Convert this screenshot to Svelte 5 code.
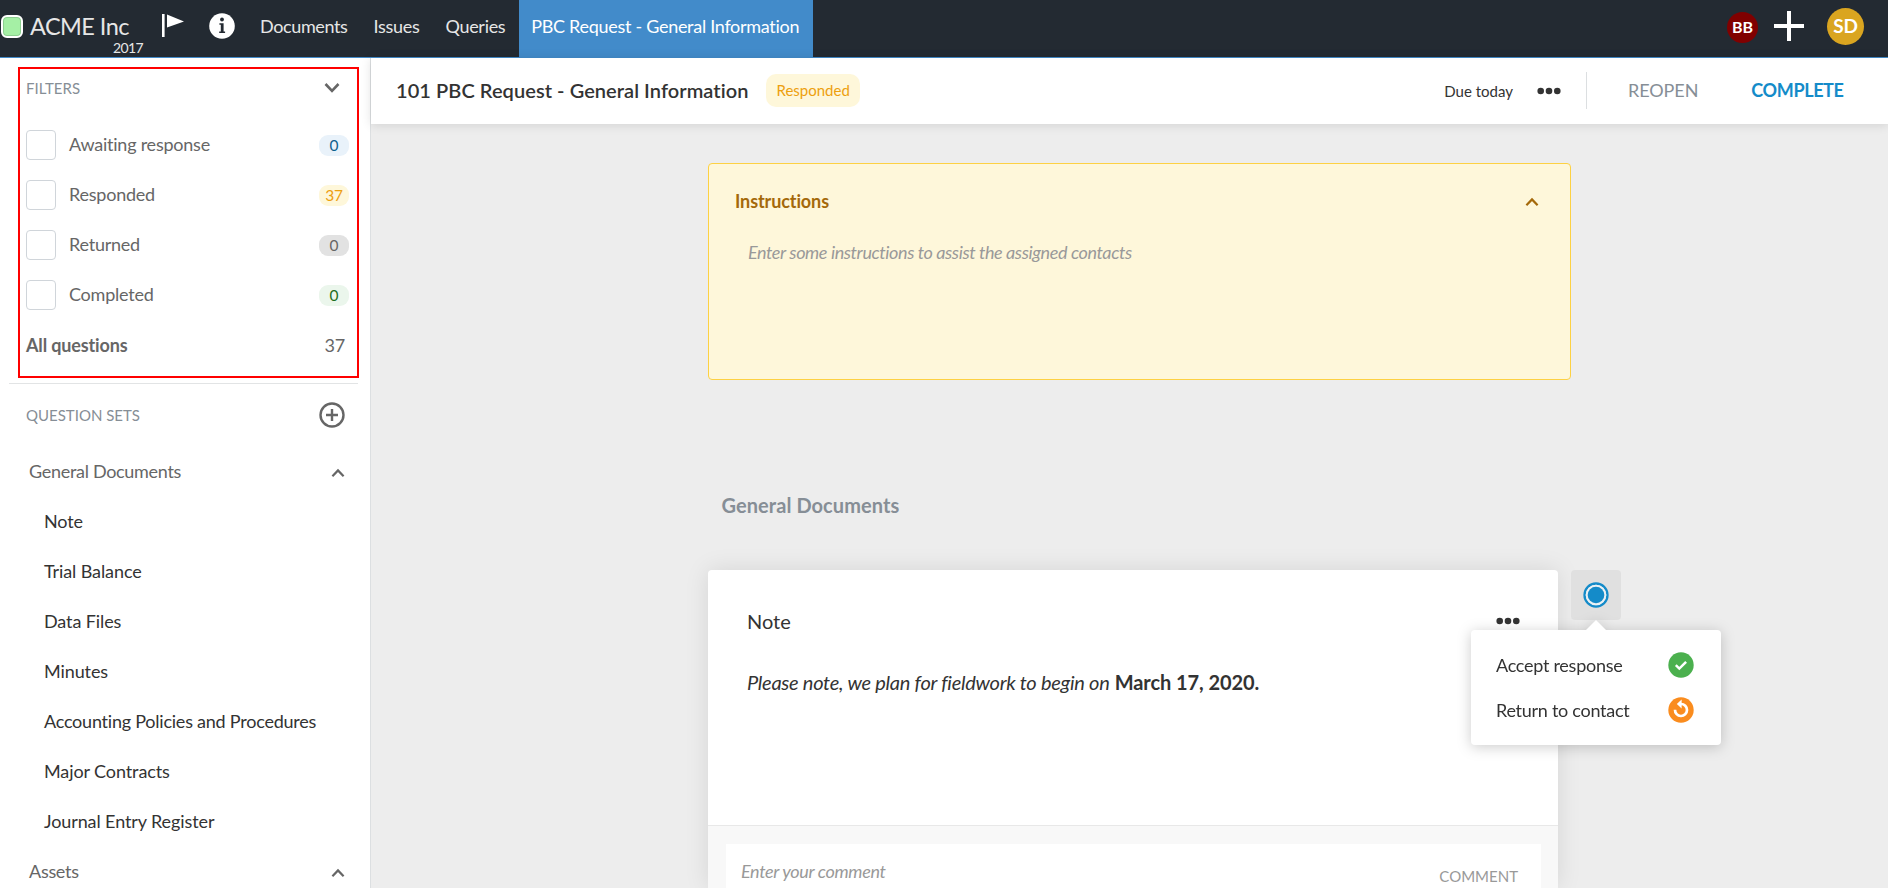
<script>
  const filters = [
    { label: 'Awaiting response', count: 0, tone: 'blue' },
    { label: 'Responded', count: 37, tone: 'yellow' },
    { label: 'Returned', count: 0, tone: 'grey' },
    { label: 'Completed', count: 0, tone: 'green' }
  ];
  const questions = ['Note', 'Trial Balance', 'Data Files', 'Minutes', 'Accounting Policies and Procedures', 'Major Contracts', 'Journal Entry Register'];
</script>

{#snippet dots()}
  <svg class="dots" width="24" height="8" viewBox="0 0 24 8"><circle cx="3.7" cy="4" r="3.3" /><circle cx="12" cy="4" r="3.3" /><circle cx="20.3" cy="4" r="3.3" /></svg>
{/snippet}

{#snippet up()}
  <svg class="up" width="14" height="10" viewBox="0 0 14 10"><path d="M1.4 8.2 7 2.4l5.6 5.8" /></svg>
{/snippet}

<div class="page">
  <header class="topbar">
    <span class="logo"></span>
    <div class="brand"><span class="name">ACME Inc</span><span class="year">2017</span></div>
    <svg class="flag" width="24" height="26" viewBox="0 0 24 26"><path d="M1 1h2.6v23H1zM6 1.5l17 7-17 6z" fill="#fff" /></svg>
    <svg class="info" width="26" height="26" viewBox="0 0 26 26"><circle cx="13" cy="13" r="12.8" fill="#fff" /><circle cx="13" cy="6.5" r="1.9" fill="#232a32" /><path d="M10.4 10.3h4.2v8.3h1.5v1.5h-5.9v-1.5h1.6v-6.8h-1.4z" fill="#232a32" /></svg>
    <nav>
      <span class="link">Documents</span><span class="link">Issues</span><span class="link">Queries</span><span class="link active">PBC Request - General Information</span>
    </nav>
    <div class="right">
      <span class="avatar bb">BB</span>
      <svg class="plus" width="30" height="30" viewBox="0 0 30 30"><path d="M13 0h4v13h13v4H17v13h-4V17H0v-4h13z" fill="#fff" /></svg>
      <span class="avatar sd">SD</span>
    </div>
  </header>

  <div class="body">
    <aside>
      <section class="filters">
        <div class="cap"><span>FILTERS</span><svg class="down" width="16" height="12" viewBox="0 0 16 12"><path d="M1.5 2 8 8.8 14.5 2" /></svg></div>
        {#each filters as f}
          <div class="filter"><i></i><span class="label">{f.label}</span><b class={f.tone}>{f.count}</b></div>
        {/each}
        <div class="all"><strong>All questions</strong><span>37</span></div>
      </section>
      <div class="cap sets"><span>QUESTION SETS</span><svg class="add" width="26" height="26" viewBox="0 0 26 26"><circle cx="13" cy="13" r="11.5" /><path d="M13 7v12M7 13h12" /></svg></div>
      <div class="group"><span>General Documents</span>{@render up()}</div>
      {#each questions as q}<div class="item" class:long={q.length > 30}>{q}</div>{/each}
      <div class="group"><span>Assets</span>{@render up()}</div>
      <div class="highlight"></div>
    </aside>

    <main>
      <div class="titlebar">
        <h1>101 PBC Request - General Information</h1>
        <span class="status">Responded</span>
        <div class="actions">
          <span class="due">Due today</span>{@render dots()}<span class="rule"></span>
          <span class="reopen">REOPEN</span><span class="complete">COMPLETE</span>
        </div>
      </div>
      <div class="content">
        <section class="instructions">
          <div class="ihead"><h2>Instructions</h2>{@render up()}</div>
          <p>Enter some instructions to assist the assigned contacts</p>
        </section>
        <h3>General Documents</h3>
        <div class="row">
          <article>
            <div class="chead"><span>Note</span>{@render dots()}</div>
            <p class="msg"><em>Please note, we plan for fieldwork to begin on</em> <strong>March 17, 2020.</strong></p>
            <footer><div class="comment"><em>Enter your comment</em><span>COMMENT</span></div></footer>
          </article>
          <div class="state">
            <svg width="26" height="26" viewBox="0 0 26 26"><circle cx="13" cy="13" r="11.5" fill="none" stroke="#148bc9" stroke-width="2.3" /><circle cx="13" cy="13" r="9.3" fill="none" stroke="#e9f1f5" stroke-width="2" /><circle cx="13" cy="13" r="8.3" fill="#148bc9" /></svg>
            <div class="menu">
              <div><span>Accept response</span><svg width="26" height="26" viewBox="0 0 26 26"><circle cx="13" cy="13" r="12.7" fill="#4bb04e" /><path d="m7.8 13.2 3.5 3.4 6.8-6.8" fill="none" stroke="#fff" stroke-width="2.5" /></svg></div>
              <div><span>Return to contact</span><svg width="26" height="26" viewBox="0 0 26 26"><circle cx="13" cy="13" r="12.7" fill="#fa8c1e" /><path d="M7 12.8a6 6 0 1 0 6-5.8" fill="none" stroke="#fff" stroke-width="2.7" /><path d="M13.6 2.6v8.8L8.8 7z" fill="#fff" /></svg></div>
            </div>
          </div>
        </div>
      </div>
    </main>
  </div>
</div>

<style>
  .page { width: 1888px; height: 888px; overflow: hidden; display: flex; flex-direction: column; font-family: Lato, sans-serif; font-size: 18px; color: #333; background: #ededed; }
  h1, h2, h3, p { margin: 0; }
  span, strong, em { white-space: nowrap; }
  .topbar { flex: none; height: 58px; box-sizing: border-box; border-bottom: 1px solid #428bca; background: #232a32; display: flex; align-items: flex-start; color: #e6e6e6; }
  .logo { box-sizing: border-box; width: 22px; height: 23px; margin: 15px 7px 0 1px; border: 2px solid #fff; border-radius: 6px; background: #a5f0a5; box-shadow: inset 0 0 0 1px #8ccf90; }
  .brand { width: 113px; height: 57px; display: flex; flex-direction: column; }
  .name { font-size: 23.5px; letter-spacing: -0.55px; line-height: 30px; margin-top: 11px; }
  .year { font-size: 14px; letter-spacing: -0.6px; line-height: 16px; align-self: flex-end; margin-top: -1px; }
  .flag { margin: 13px 0 0 18px; }
  .info { margin: 13px 0 0 24px; }
  nav { display: flex; margin-left: 12px; letter-spacing: -0.29px; }
  .link { padding: 0 13px; line-height: 52px; height: 57px; }
  .link:first-child { letter-spacing: -0.38px; }
  .link.active { padding: 0 13.8px 0 12.3px; margin-left: 0.5px; background: #428bca; color: #fff; }
  .right { margin-left: auto; display: flex; height: 57px; }
  .avatar { border-radius: 50%; color: #fff; font-weight: 700; text-align: center; }
  .bb { width: 31px; height: 31px; margin-top: 12px; background: #800000; font-size: 16px; line-height: 29px; }
  .plus { margin: 11px 23px 0 16px; }
  .sd { width: 37px; height: 37px; margin: 8px 24px 0 0; background: #daa520; font-size: 19px; line-height: 36px; letter-spacing: -0.3px; }
  .body { flex: 1; min-height: 0; display: flex; }
  aside { position: relative; flex: none; width: 371px; box-sizing: border-box; border-right: 1px solid #dcdfe1; background: #fff; color: #666; letter-spacing: -0.23px; }
  .filters { box-sizing: border-box; height: 326px; margin: 0 12px 0 9px; border-bottom: 1px solid #e2e4e5; }
  .cap { font-size: 15px; letter-spacing: 0; color: #868e96; display: flex; justify-content: space-between; align-items: center; height: 60px; }
  .filters .cap { padding: 0 18px 2px 17px; }
  .sets { padding: 0 25px 0 26px; height: 62px; }
  .down, .up { fill: none; stroke: #666; stroke-width: 2.2; }
  .down { stroke-width: 2.6; }
  .add { fill: none; stroke: #666; stroke-width: 2.4; }
  .filter { height: 50px; padding: 0 0 0 17px; display: flex; align-items: center; }
  .filter i { box-sizing: border-box; width: 30px; height: 30px; border: 1px solid #d0d5da; border-radius: 4px; }
  .label { margin: 0 auto 2px 13px; }
  .filter b { width: 30px; height: 21px; line-height: 21px; margin-right: 9px; border-radius: 9px; font-weight: 400; font-size: 15.5px; text-align: center; }
  .blue { background: #e9f2fa; color: #0f618d; }
  .yellow { background: #fef7da; color: #eda00f; }
  .grey { background: #e2e2e2; color: #666; }
  .green { background: #ebf6ec; color: #1f6e22; }
  .all { display: flex; justify-content: space-between; padding: 0 13px 0 17px; line-height: 50px; }
  .all strong { letter-spacing: -0.15px; }
  .group { height: 50px; display: flex; justify-content: space-between; align-items: center; padding: 0 25px 0 29px; letter-spacing: -0.3px; }
  .group .up { margin-top: 3px; }
  .item { line-height: 50px; height: 50px; padding-left: 44px; color: #333; letter-spacing: -0.1px; white-space: nowrap; }
  .item.long { letter-spacing: -0.23px; }
  .highlight { position: absolute; left: 18px; top: 9px; width: 337px; height: 307px; border: 2px solid #f00; }
  main { flex: 1; min-width: 0; display: flex; flex-direction: column; }
  .titlebar { position: relative; z-index: 1; flex: none; box-sizing: border-box; height: 66px; background: #fff; display: flex; align-items: center; padding: 0 0 1px 25px; box-shadow: 0 1px 10px rgba(0,0,0,.12); }
  h1 { font-size: 20px; font-weight: 600; letter-spacing: 0.06px; padding-bottom: 1px; }
  .status { margin-left: 18px; height: 33px; line-height: 33px; padding: 0 10px; border-radius: 10px; background: #fef7da; color: #eda00f; font-size: 15px; }
  .actions { margin-left: auto; display: flex; align-items: center; padding-right: 44.5px; }
  .due { font-size: 15px; margin-right: 24px; }
  .dots { fill: #333; }
  .rule { width: 1px; height: 37px; background: #dcdfe1; margin: 0 41px 0 25px; }
  .reopen { color: #868e96; margin-right: 53px; padding-bottom: 2px; letter-spacing: -0.05px; }
  .complete { color: #148bc9; font-weight: 700; padding-bottom: 2px; letter-spacing: -0.38px; }
  .content { padding: 39px 0 0 337px; }
  .instructions { box-sizing: border-box; width: 863px; height: 217px; border: 1px solid #fdd143; border-radius: 4px; background: #fef7da; }
  .ihead { display: flex; justify-content: space-between; align-items: center; padding: 0 31px 2px 26px; height: 74px; }
  .ihead .up { stroke: #a4690a; margin-top: 2px; }
  h2 { font-size: 18px; font-weight: 700; letter-spacing: -0.1px; color: #a4690a; }
  .instructions p { padding: 0 39px; font-style: italic; color: #999; line-height: 24px; letter-spacing: -0.39px; }
  h3 { margin: 111px 0 51px 13.5px; font-size: 20px; line-height: 28px; color: #868e96; font-weight: 700; letter-spacing: 0.07px; }
  .row { display: flex; gap: 13px; align-items: flex-start; }
  article { flex: none; width: 850px; height: 318px; background: #fff; border-radius: 4px 4px 0 0; box-shadow: 0 0 24px rgba(0,0,0,.1); }
  .chead { height: 99px; display: flex; justify-content: space-between; align-items: center; padding: 1px 38px 0 39px; font-size: 20px; }
  .msg { height: 155px; padding-left: 39px; font-size: 20px; line-height: 24px; }
  .msg em { letter-spacing: -0.26px; }
  .msg strong { letter-spacing: -0.07px; }
  footer { border-top: 1px solid #e8e8e8; background: #f8f8f8; padding: 18px 17px 0 18px; }
  .comment { box-sizing: border-box; height: 44px; background: #fff; display: flex; justify-content: space-between; padding: 15px 23px 0 15px; color: #999; line-height: 24px; }
  .comment em { letter-spacing: -0.34px; }
  .comment span { font-size: 15px; margin-top: 6px; line-height: 23px; }
  .state { position: relative; width: 50px; height: 50px; border-radius: 4px; background: #e0e0e0; display: flex; align-items: center; justify-content: center; }
  .menu { position: absolute; left: -100px; top: 60px; width: 250px; height: 115px; box-sizing: border-box; padding: 12px 27px 0 25px; background: #fff; border-radius: 4px; filter: drop-shadow(0 2px 7px rgba(0,0,0,.2)); letter-spacing: -0.27px; }
  .menu::before { content: ''; position: absolute; left: 115px; top: -10px; border: 10px solid transparent; border-top: 0; border-bottom-color: #fff; }
  .menu div { height: 45px; display: flex; align-items: center; justify-content: space-between; }
</style>
